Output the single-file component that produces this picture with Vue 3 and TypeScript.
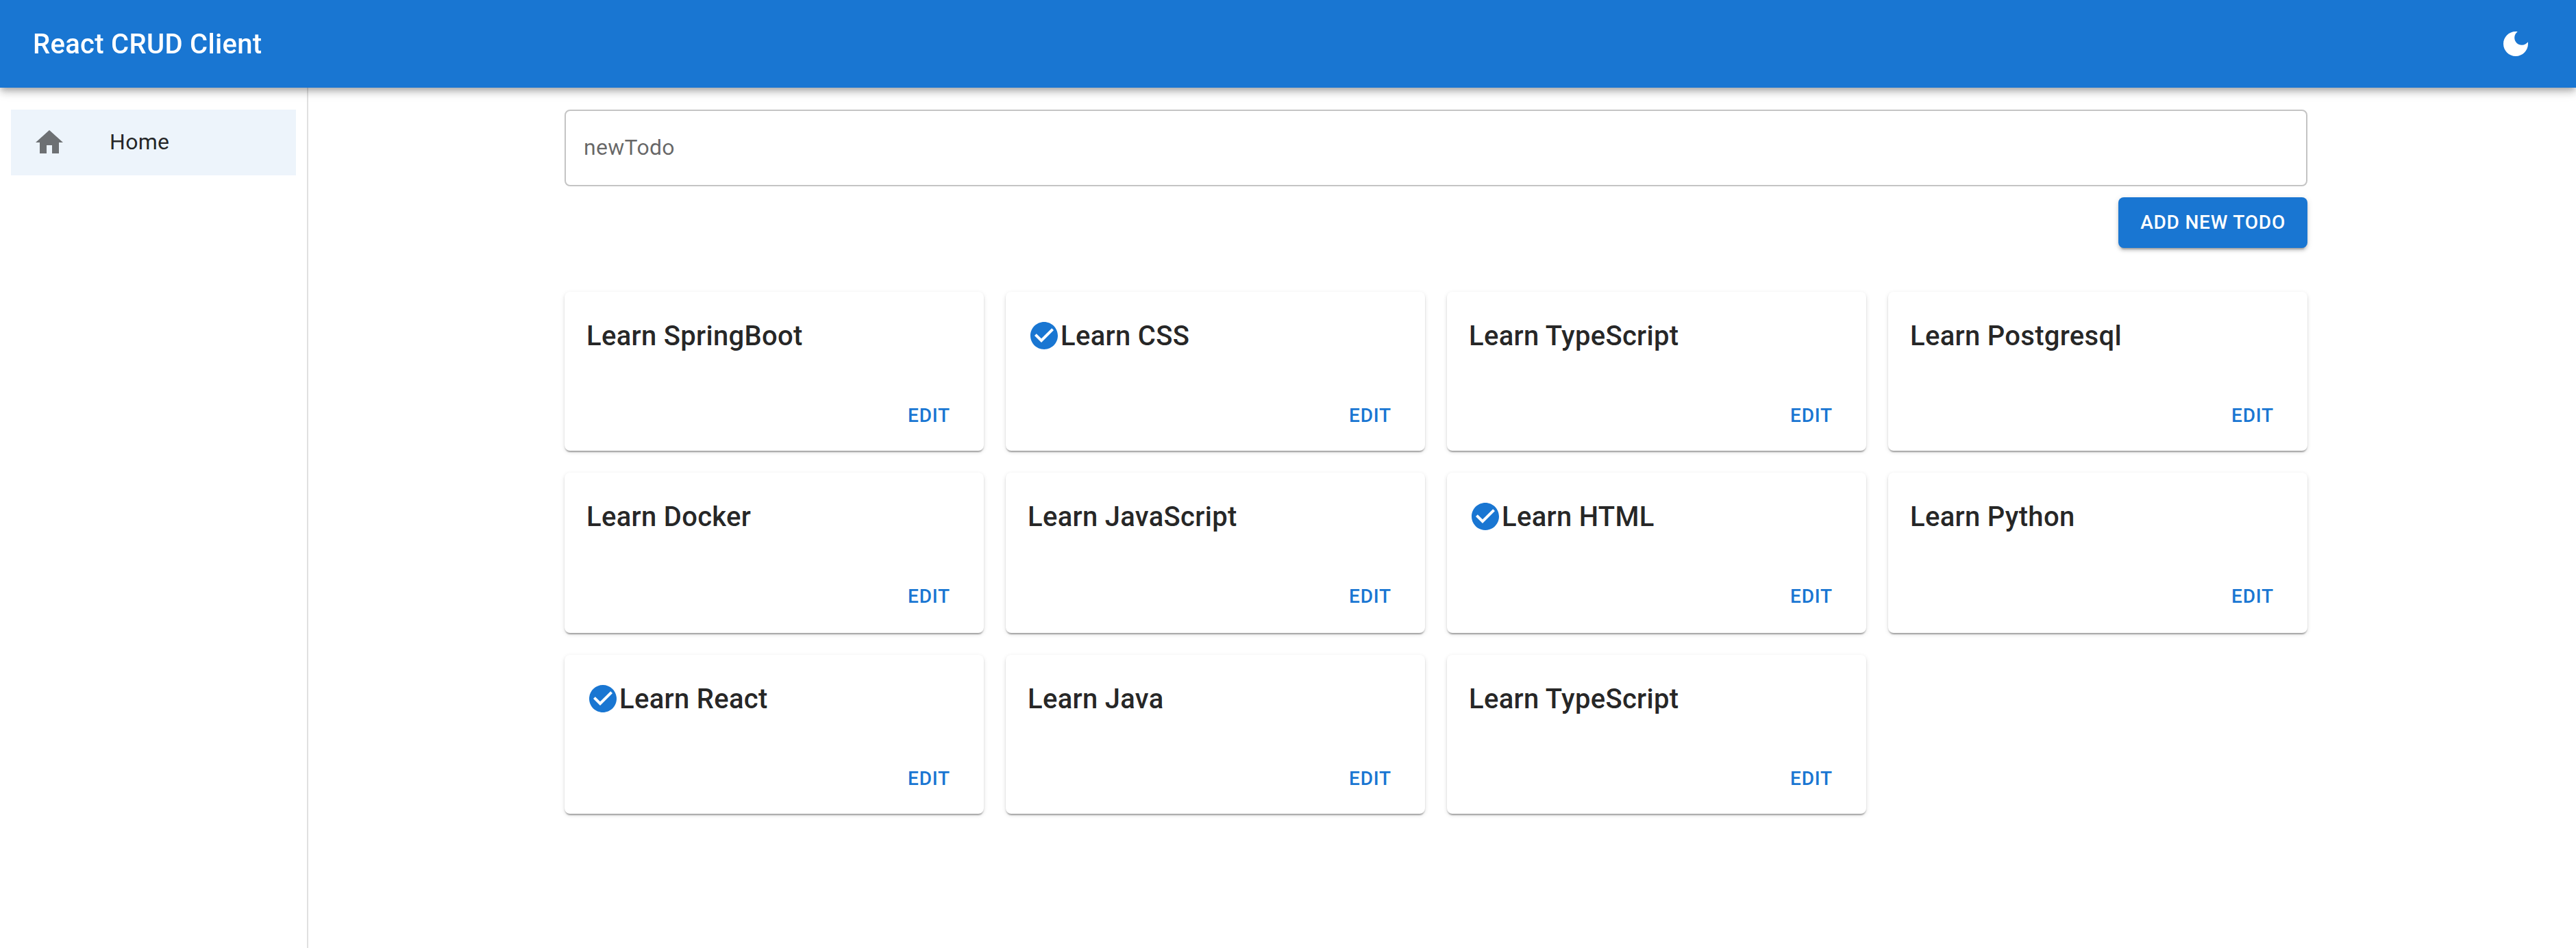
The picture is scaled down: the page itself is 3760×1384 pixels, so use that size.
<script setup lang="ts">
import { ref } from 'vue'

interface Todo {
  id: number
  title: string
  completed: boolean
}

const todos = ref<Todo[]>([
  { id: 1, title: 'Learn SpringBoot', completed: false },
  { id: 2, title: 'Learn CSS', completed: true },
  { id: 3, title: 'Learn TypeScript', completed: false },
  { id: 4, title: 'Learn Postgresql', completed: false },
  { id: 5, title: 'Learn Docker', completed: false },
  { id: 6, title: 'Learn JavaScript', completed: false },
  { id: 7, title: 'Learn HTML', completed: true },
  { id: 8, title: 'Learn Python', completed: false },
  { id: 9, title: 'Learn React', completed: true },
  { id: 10, title: 'Learn Java', completed: false },
  { id: 11, title: 'Learn TypeScript', completed: false },
])

const newTodo = ref('')

function addTodo(): void {
  const title = newTodo.value.trim()
  if (!title) return
  todos.value.push({ id: Date.now(), title, completed: false })
  newTodo.value = ''
}
</script>

<template>
  <div class="app">
    <header class="app-bar">
      <h1 class="brand">React CRUD Client</h1>
      <button class="icon-button" type="button" aria-label="Toggle dark mode">
        <svg class="icon" viewBox="0 0 24 24">
          <path d="M12 3c-4.97 0-9 4.03-9 9s4.03 9 9 9 9-4.03 9-9c0-.46-.04-.92-.1-1.36-.98 1.37-2.58 2.26-4.4 2.26-2.98 0-5.4-2.42-5.4-5.4 0-1.81.89-3.42 2.26-4.4-.44-.06-.9-.1-1.36-.1" />
        </svg>
      </button>
    </header>

    <div class="body">
      <nav class="sidebar">
        <a class="nav-item">
          <span class="nav-icon">
            <svg class="icon" viewBox="0 0 24 24"><path d="M10 20v-6h4v6h5v-8h3L12 3 2 12h3v8z" /></svg>
          </span>
          <span class="nav-label">Home</span>
        </a>
      </nav>

      <main class="content">
        <form class="new-todo" @submit.prevent="addTodo">
          <input v-model="newTodo" class="field" type="text" placeholder="newTodo" />
          <button class="add-button" type="submit">Add new todo</button>
        </form>

        <section class="grid">
          <article v-for="todo in todos" :key="todo.id" class="card">
            <div class="card-title">
              <svg v-if="todo.completed" class="icon check" viewBox="0 0 24 24">
                <path d="M12 2C6.48 2 2 6.48 2 12s4.48 10 10 10 10-4.48 10-10S17.52 2 12 2m-2 15-5-5 1.41-1.41L10 14.17l7.59-7.59L19 8z" />
              </svg>
              <span>{{ todo.title }}</span>
            </div>
            <div class="card-actions">
              <button class="edit-button" type="button">Edit</button>
            </div>
          </article>
        </section>
      </main>
    </div>
  </div>
</template>

<style>
body {
  margin: 0;
  background: #fff;
}
</style>

<style scoped>
.app {
  display: flex;
  flex-direction: column;
  height: 1384px;
  overflow: hidden;
  font-family: Roboto, 'Liberation Sans', sans-serif;
  font-size: 32px;
  line-height: 48px;
  letter-spacing: 0.00938em;
  color: rgba(0, 0, 0, 0.87);
  box-sizing: border-box;
}

.app *,
.app *::before {
  box-sizing: border-box;
}

button {
  border: 0;
  margin: 0;
  font-family: inherit;
  cursor: pointer;
}

.icon {
  display: block;
  flex: none;
  width: 48px;
  height: 48px;
  fill: currentColor;
}

.app-bar {
  position: relative;
  z-index: 2;
  display: flex;
  align-items: center;
  justify-content: space-between;
  flex: none;
  height: 128px;
  padding: 0 48px;
  background: #1976d2;
  color: #fff;
  will-change: transform;
  box-shadow:
    0 4px 8px -2px rgba(0, 0, 0, 0.2),
    0 8px 10px 0 rgba(0, 0, 0, 0.14),
    0 2px 20px 0 rgba(0, 0, 0, 0.12);
}

.brand {
  height: 64px;
  margin: 0;
  font-size: 40px;
  font-weight: 500;
  line-height: 65px;
  letter-spacing: 0.0075em;
}

.icon-button {
  padding: 16px;
  background: transparent;
  color: inherit;
}

.body {
  display: flex;
  flex: 1;
  min-height: 0;
}

.sidebar {
  flex: none;
  width: 450px;
  padding: 32px 16px 0;
  border-right: 2px solid rgba(0, 0, 0, 0.12);
}

.nav-item {
  display: flex;
  align-items: center;
  height: 96px;
  padding: 0 32px;
  background: rgba(25, 118, 210, 0.08);
}

.nav-icon {
  flex: none;
  width: 112px;
  color: rgba(0, 0, 0, 0.54);
}

.nav-label {
  height: 48px;
  line-height: 46px;
}

.content {
  flex: none;
  width: 2544px;
  margin-left: 374px;
  padding-top: 32px;
}

.new-todo {
  display: flex;
  flex-direction: column;
  align-items: flex-end;
  gap: 16px;
  margin-bottom: 64px;
}

.field {
  width: 100%;
  height: 112px;
  padding: 0 26px 2px;
  border: 2px solid rgba(0, 0, 0, 0.23);
  border-radius: 8px;
  outline: 0;
  background: transparent;
  font: inherit;
  letter-spacing: inherit;
  color: inherit;
}

.field::placeholder {
  color: rgba(0, 0, 0, 0.6);
  opacity: 1;
}

.add-button,
.edit-button {
  font-size: 28px;
  font-weight: 500;
  line-height: 49px;
  letter-spacing: 0.02857em;
  text-transform: uppercase;
  border-radius: 8px;
}

.add-button {
  height: 74px;
  padding: 12px 32px 13px;
  background: #1976d2;
  color: #fff;
  box-shadow:
    0 6px 2px -4px rgba(0, 0, 0, 0.2),
    0 4px 4px 0 rgba(0, 0, 0, 0.14),
    0 2px 10px 0 rgba(0, 0, 0, 0.12);
}

.grid {
  display: grid;
  grid-template-columns: repeat(4, 1fr);
  grid-template-rows: 232px 234px 232px;
  gap: 32px;
}

.card {
  min-height: 0;
  border-radius: 8px;
  background: #fff;
  box-shadow:
    0 4px 2px -2px rgba(0, 0, 0, 0.2),
    0 2px 2px 0 rgba(0, 0, 0, 0.14),
    0 2px 6px 0 rgba(0, 0, 0, 0.12);
}

.card-title {
  display: flex;
  align-items: flex-start;
  height: 128px;
  padding: 32px 32px 0;
  font-size: 40px;
  font-weight: 500;
  line-height: 65px;
  letter-spacing: 0.0075em;
}

.check {
  margin-top: 8px;
  color: #1976d2;
}

.card-actions {
  display: flex;
  justify-content: flex-end;
  padding: 16px 16px 0;
}

.edit-button {
  min-width: 128px;
  padding: 12px 16px;
  background: transparent;
  color: #1976d2;
}
</style>
